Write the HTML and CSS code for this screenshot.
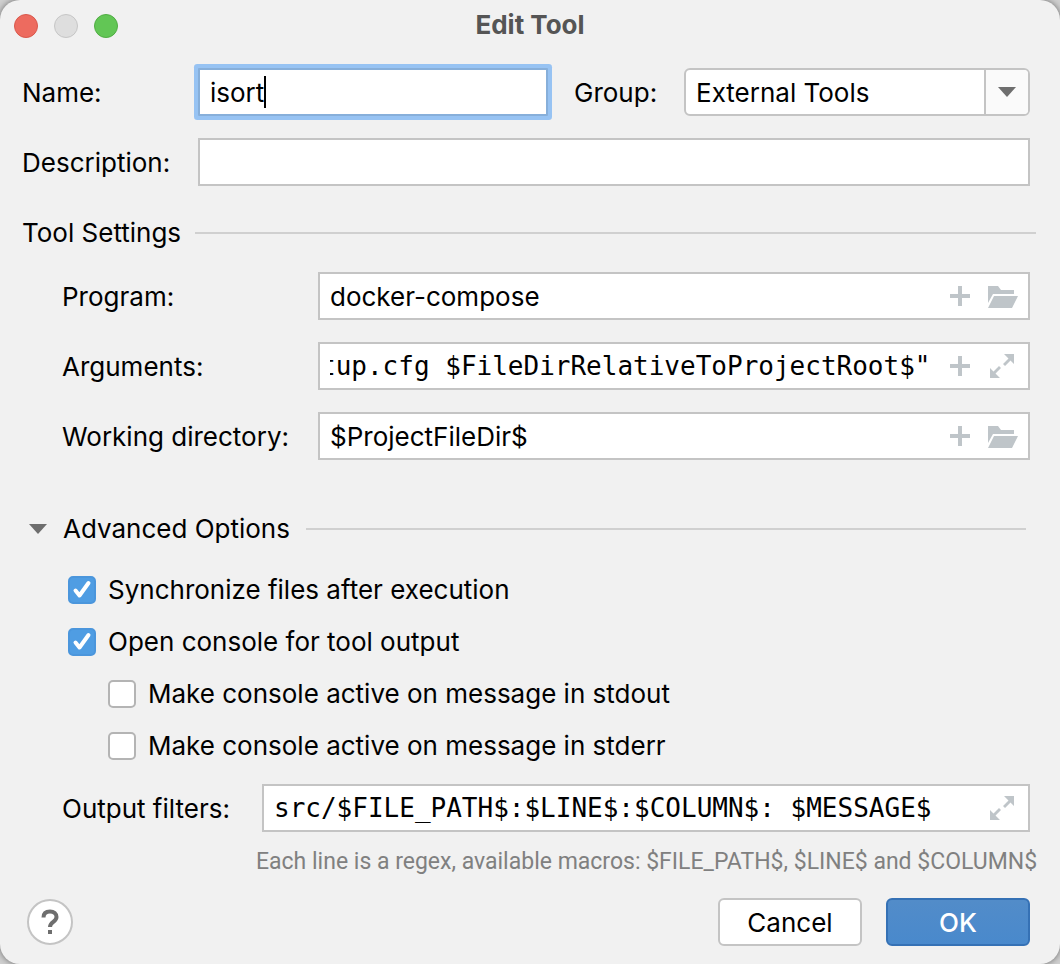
FILE: index.html
```html
<!DOCTYPE html>
<html lang="en">
<head>
<meta charset="utf-8">
<title>Edit Tool</title>
<link rel="stylesheet" href="styles.css">
</head>
<body>
<svg class="symbols" aria-hidden="true">
  <symbol id="plus" viewBox="0 0 20 20"><path d="M8 0h4v8h8v4h-8v8H8v-8H0V8h8z"/></symbol>
  <symbol id="folder" viewBox="-2 -2 32 24"><path d="M0 0h10l3 4h13v4H5L0 17zM6 10h24l-6 12H0z"/></symbol>
  <symbol id="expand" viewBox="0 0 24 24"><path d="M14 0h10v10l-3.500-3.500-5.500 5.500-2-2 5.500-5.500zM0 14l3.500 3.500L9 12l2 2-5.500 5.500L10 24H0z"/></symbol>
  <symbol id="triangle" viewBox="0 0 18 10"><path d="M0 0h18L9 10z"/></symbol>
</svg>
<form class="dialog" onsubmit="return false">
  <header class="titlebar">
    <div class="lights">
      <button type="button" class="light close" aria-label="Close"></button>
      <button type="button" class="light minimize" aria-label="Minimize" disabled></button>
      <button type="button" class="light zoom" aria-label="Zoom"></button>
    </div>
    <h1 class="title">Edit Tool</h1>
  </header>

  <div class="rows general">
    <div class="row">
      <label class="label" for="name">Name:</label>
      <div class="field focused name-field">
        <input id="name" type="text" value="isort">
        <span class="caret"></span>
      </div>
      <label class="label group-label" for="group">Group:</label>
      <div class="combo">
        <select id="group"><option>External Tools</option></select>
        <span class="combo-arrow"><svg class="triangle"><use href="#triangle"/></svg></span>
      </div>
    </div>
    <div class="row">
      <label class="label" for="description">Description:</label>
      <div class="field"><input id="description" type="text"></div>
    </div>
  </div>

  <section>
    <h2 class="separator">Tool Settings</h2>
    <div class="rows settings">
      <div class="row">
        <label class="label" for="program">Program:</label>
        <div class="field">
          <input id="program" type="text" value="docker-compose">
          <button type="button" class="icon" aria-label="Insert macro"><svg class="plus"><use href="#plus"/></svg></button>
          <button type="button" class="icon" aria-label="Browse"><svg class="folder"><use href="#folder"/></svg></button>
        </div>
      </div>
      <div class="row">
        <label class="label" for="arguments">Arguments:</label>
        <div class="field">
          <input id="arguments" class="mono" type="text" value="tup.cfg $FileDirRelativeToProjectRoot$&quot;">
          <button type="button" class="icon" aria-label="Insert macro"><svg class="plus"><use href="#plus"/></svg></button>
          <button type="button" class="icon" aria-label="Expand"><svg class="expand"><use href="#expand"/></svg></button>
        </div>
      </div>
      <div class="row">
        <label class="label" for="directory">Working directory:</label>
        <div class="field">
          <input id="directory" type="text" value="$ProjectFileDir$">
          <button type="button" class="icon" aria-label="Insert macro"><svg class="plus"><use href="#plus"/></svg></button>
          <button type="button" class="icon" aria-label="Browse"><svg class="folder"><use href="#folder"/></svg></button>
        </div>
      </div>
    </div>
  </section>

  <section>
    <h2 class="separator advanced">
      <button type="button" class="toggle" aria-expanded="true"><svg class="triangle"><use href="#triangle"/></svg>Advanced Options</button>
    </h2>
    <div class="checks">
      <label class="check"><span class="box"><input type="checkbox" checked><svg class="tick" viewBox="0 0 28 28"><path d="M7.500 14.500l4 5L20.500 7"/></svg></span>Synchronize files after execution</label>
      <label class="check"><span class="box"><input type="checkbox" checked><svg class="tick" viewBox="0 0 28 28"><path d="M7.500 14.500l4 5L20.500 7"/></svg></span>Open console for tool output</label>
      <label class="check nested"><span class="box"><input type="checkbox"></span>Make console active on message in stdout</label>
      <label class="check nested"><span class="box"><input type="checkbox"></span>Make console active on message in stderr</label>
    </div>
    <div class="rows filters">
      <div class="row">
        <label class="label" for="filters">Output filters:</label>
        <div class="field">
          <input id="filters" class="mono" type="text" value="src/$FILE_PATH$:$LINE$:$COLUMN$: $MESSAGE$">
          <button type="button" class="icon" aria-label="Expand"><svg class="expand"><use href="#expand"/></svg></button>
        </div>
      </div>
    </div>
    <p class="hint">Each line is a regex, available macros: $FILE_PATH$, $LINE$ and $COLUMN$</p>
  </section>

  <footer class="actions">
    <button type="button" class="help" aria-label="Help"><svg viewBox="0 0 20 26"><path d="M3.500 8.500C3.500 4.500 6 2.500 10 2.500s6.500 2.200 6.500 5.500c0 5-6.500 4.800-6.500 10"/><path class="dot" d="M8 21h4v4H8z"/></svg></button>
    <button type="button" class="button">Cancel</button>
    <button type="submit" class="button primary">OK</button>
  </footer>
</form>
<script src="script.js"></script>
</body>
</html>
```
FILE: styles.css
```css
* { box-sizing: border-box; }

body {
  margin: 0;
  background: #d0d0d0;
  color: #000;
  font: 26px/32px Inter, "Liberation Sans", sans-serif;
}

input, select, button {
  margin: 0;
  border: 0;
  padding: 0;
  background: none;
  color: inherit;
  font: inherit;
  outline: none;
}

.symbols { position: absolute; width: 0; height: 0; }

.dialog {
  display: flex;
  flex-direction: column;
  min-height: 100vh;
  padding-bottom: 18px;
  border-radius: 20px;
  background: #f1f1f1;
  box-shadow: 0 0 6px rgba(0, 0, 0, 0.5);
}

.titlebar {
  display: grid;
  grid-template-columns: 1fr auto 1fr;
  align-items: center;
  height: 50px;
  padding: 0 14px;
}
.lights { display: flex; gap: 16px; padding-top: 2px; }
.light { width: 24px; height: 24px; border: 1px solid; border-radius: 50%; }
.close { background: #ed6b5f; border-color: #d9584c; }
.minimize { background: #dedede; border-color: #c6c6c6; }
.zoom { background: #62c655; border-color: #50ad43; }
.title { margin: 0; color: #555; font-size: 26px; font-weight: 700; }

.rows { display: flex; flex-direction: column; gap: 22px; padding-right: 30px; }
.row { display: flex; align-items: center; }
.label { flex: none; padding-top: 2px; }
.general { padding-top: 18px; padding-left: 22px; }
.general .label { width: 176px; }
.settings { padding-top: 23px; padding-left: 62px; }
.settings .label { width: 256px; }
.filters { padding-top: 22px; padding-left: 62px; }
.filters .label { width: 200px; }

.field {
  display: flex;
  flex: 1;
  align-items: center;
  min-width: 0;
  height: 48px;
  padding: 0 10px;
  border: 2px solid #c4c4c4;
  background: #fff;
}
.field input { flex: 1; min-width: 0; height: 40px; margin-right: 14px; }
.field .mono { font-family: "DejaVu Sans Mono", "Liberation Mono", monospace; }
.focused {
  position: relative;
  border-color: #87afda;
  box-shadow: 0 0 0 4px #97c3f3;
  border-radius: 1px;
}
.caret {
  position: absolute;
  top: 6px;
  left: 64px;
  width: 2px;
  height: 32px;
  background: #000;
}
.name-field { flex: 1 1 350px; }
.general .group-label { width: 136px; padding-left: 26px; }

.combo { position: relative; flex: 1 1 346px; height: 48px; }
.combo select {
  appearance: none;
  width: 100%;
  height: 100%;
  padding: 2px 54px 0 10px;
  border: 2px solid #c4c4c4;
  border-radius: 6px;
  background: #fff;
}
.combo-arrow {
  position: absolute;
  inset: 2px 2px 2px auto;
  display: grid;
  place-items: center;
  width: 44px;
  border-left: 2px solid #c4c4c4;
  border-radius: 0 4px 4px 0;
  background: #fafafa;
  pointer-events: none;
}

.icon { display: grid; place-items: center; width: 32px; height: 32px; }
.icon + .icon { margin-left: 10px; }
.icon svg { fill: #bfc5c9; }
.plus { width: 20px; height: 20px; }
.folder { width: 32px; height: 24px; }
.expand { width: 24px; height: 24px; }
.triangle { width: 18px; height: 10px; fill: #6e6e6e; }

.separator {
  display: flex;
  align-items: center;
  gap: 14px;
  margin: 0;
  padding: 31px 24px 0 22px;
  font-size: 26px;
  font-weight: 400;
}
.separator::after { content: ""; flex: 1; height: 2px; background: #d0d0d0; }
.advanced { gap: 16px; padding: 53px 34px 0 29px; }
.toggle { display: flex; align-items: center; gap: 16px; }

.checks { display: flex; flex-direction: column; gap: 20px; padding: 29px 30px 0 68px; }
.check { display: flex; align-items: center; gap: 12px; }
.nested { padding-left: 40px; }
.box { display: grid; width: 28px; height: 28px; }
.box > * { grid-area: 1 / 1; }
.box input {
  appearance: none;
  width: 28px;
  height: 28px;
  border: 2px solid #b4b4b4;
  border-radius: 5px;
  background: #fff;
}
.box input:checked { border-color: #4b96dc; background: #4f9de3; }
.tick {
  width: 28px;
  height: 28px;
  fill: none;
  stroke: #fff;
  stroke-width: 4;
  stroke-linecap: round;
  stroke-linejoin: round;
  pointer-events: none;
}

.hint {
  margin: 0;
  padding: 14px 24px 0 256px;
  color: #808080;
  font-family: Roboto, Inter, sans-serif;
  font-size: 23px;
  white-space: nowrap;
}

.actions { display: flex; align-items: center; gap: 24px; padding: 20px 30px 0 27px; }
.help {
  display: grid;
  place-items: center;
  width: 46px;
  height: 46px;
  margin-right: auto;
  border: 2px solid #c4c4c4;
  border-radius: 50%;
  background: #fff;
}
.help svg { width: 20px; height: 26px; fill: none; stroke: #6e6e6e; stroke-width: 4; }
.help .dot { fill: #6e6e6e; stroke: none; }
.button {
  width: 144px;
  height: 48px;
  padding-top: 2px;
  border: 2px solid #c4c4c4;
  border-radius: 6px;
  background: #fff;
}
.primary {
  border-color: #3571b5;
  background: linear-gradient(#528cc9, #4989cc);
  color: #fff;
  font-weight: 500;
}
```
FILE: script.js
```js
const args = document.getElementById("arguments");
args.scrollLeft = args.scrollWidth;
```
